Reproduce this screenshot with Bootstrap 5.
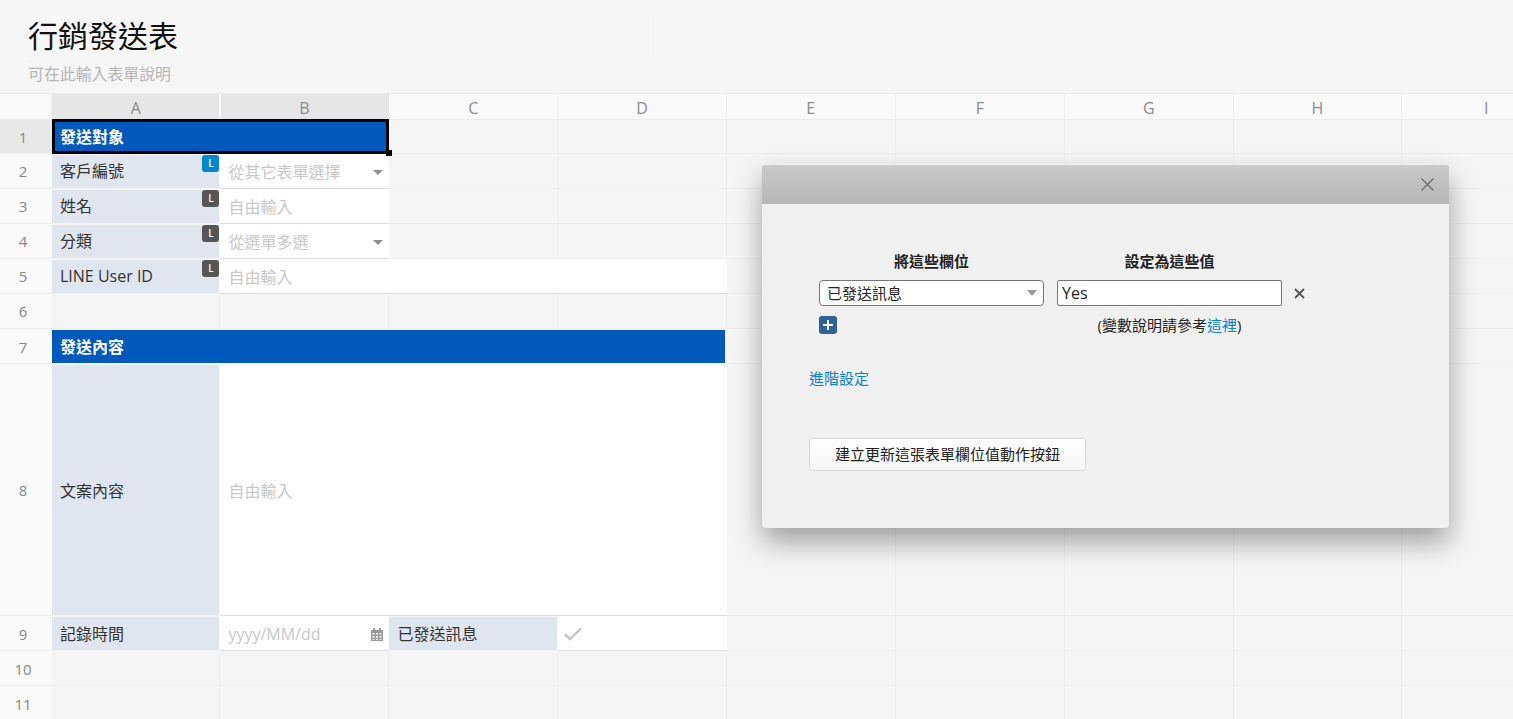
<!DOCTYPE html>
<html lang="zh-Hant">
<head>
<meta charset="utf-8">
<title>行銷發送表</title>
<link href="https://cdn.jsdelivr.net/npm/bootstrap@5.3.0/dist/css/bootstrap.min.css" rel="stylesheet">
<style>
html,body{height:100%;overflow:hidden}
body{background:#f6f6f6;font-family:"Open Sans","Noto Sans CJK TC",sans-serif;color:#333;font-size:16px;position:relative}
.head-zone{height:94px;padding:11px 0 0 27px;border-bottom:1px solid #ececec}
.doc-title{width:627px;height:46px;margin:0;padding:1px 0 0;font-size:30px;line-height:46px;font-weight:400;color:#111;border:1px solid #f3f3f3;font-family:inherit}
.doc-desc{width:1001px;height:25px;margin-top:3px;padding:1px 0 0;font-size:15.9px;line-height:25px;color:#b5b5b5;border:1px solid #f3f3f3}
.sheet{display:grid;grid-template-columns:52px 168.4px 169px 169px 168.4px 169px 169px 169px 168.4px 169px;grid-template-rows:26px 34px 35px 35px 35px 35px 35px 35px 252px 35px 35px 35px;width:1520px}
.hc{display:flex;align-items:center;justify-content:center;background:#f9f9f9;color:#8c8c8c;font-size:16px;border-bottom:1px solid #ececec;border-right:1px solid #f0f0f0;padding-top:2px}
.hc-a{background:#e6e6e6;border-right:1px solid #f9f9f9}
.hc-b{background:#e6e6e6;border-left:1px solid #f9f9f9;border-right:0;padding-right:2px}
.rc{display:flex;align-items:center;justify-content:center;background:#fafafa;color:#888;font-size:15px;border-bottom:1px solid #ececec;padding:0 6px 0 0}
.rc-late{padding-top:2px}
.rc-on{background:#e8e8e8;padding-top:2px}
.ec{background:#f5f5f5;border-right:1px solid #eeeeee;border-bottom:1px solid #eeeeee}
.sec{display:flex;align-items:center;background:#0059bb;color:#fff;font-weight:700;padding:0 0 0 8px;font-size:16px}
.sec-pick{outline:3px solid #000;outline-offset:-3px;position:relative;margin-top:-1px;padding-top:1px}
.sec-pick::after{content:"";position:absolute;right:-3px;bottom:-2px;width:6px;height:6px;background:#000}
.sec-plain{margin:1px 2px 1px 0;padding-top:1px}
.lab{position:relative;display:flex;align-items:center;background:#e0e6ef;padding:0 0 1px 8px;color:#333;border-top:1px solid #f5f5f5;border-bottom:1px solid #f2f2f2;border-right:1px solid #fff}
.lab-low{padding:1px 0 0 8px}
.tag{position:absolute;top:0;right:0;width:17px;height:17px;border-radius:3px;background:#555;color:#fff;font-size:10px;font-weight:600;display:flex;align-items:center;justify-content:center}
.tag-blue{background:#0088cc}
.inp{display:flex;align-items:center;justify-content:space-between;background:#fff;padding:2px 6px 0 8px;color:#c8c8c8;border-bottom:1px solid #dedede}
.caret-mini{width:0;height:0;border-left:5px solid transparent;border-right:5px solid transparent;border-top:5px solid #8f8f8f}
.dlg{position:absolute;left:762px;top:164px;width:687px;height:364px;background:#f0f0f0;border:0;border-radius:4px;box-shadow:0 14px 28px rgba(0,0,0,.35);font-size:15px;color:#222;overflow:hidden}
.dlg-top{height:40px;background:linear-gradient(#cacaca,#b6b6b6);border-top:1px solid #f4f4f4;display:flex;align-items:center;justify-content:flex-end;padding-right:15px}
.dlg-body{padding:46px 47px 0}
.col-one{width:225px;margin-left:10px}
.col-two{width:225px;margin-left:13px}
.f-title{font-weight:700;text-align:center;color:#222;line-height:22px}
.f-hd{display:flex;margin-bottom:8px}
.f-row{display:flex;align-items:center}
.fake-select{height:26px;border:1px solid #777;border-radius:4px;background:#fff;padding:0 6px 0 7px;display:flex;align-items:center;justify-content:space-between;line-height:1}
.fake-select i{width:0;height:0;border-left:5px solid transparent;border-right:5px solid transparent;border-top:6px solid #999}
.fake-input{width:225px;margin-left:13px;height:26px;border:1px solid #777;border-radius:2px;background:#fff;padding:0 4px;line-height:24px;font-size:16px}
.x-rem{margin-left:12px;line-height:0}
.add-sq{width:18px;height:18px;margin-top:10px;border-radius:3px;background:#2f6398;display:flex;align-items:center;justify-content:center}
.hint{width:225px;margin-left:13px;padding-top:9px;text-align:center;white-space:nowrap;font-size:15px;line-height:20px}
.lnk{color:#0a7fd6;text-decoration:none}
.adv{margin-top:32px;line-height:22px}
.mk-btn{display:block;margin-top:49px;width:277px;height:33px;padding:0;background:linear-gradient(#fff,#f5f5f5);border:1px solid #d8d8d8;border-radius:3px;color:#222;font-size:15px;line-height:31px}
.check-nudge{margin-left:-2px}
</style>
</head>
<body>
<div class="head-zone">
  <h1 class="doc-title">行銷發送表</h1>
  <div class="doc-desc">可在此輸入表單說明</div>
</div>
<div class="sheet">
  <div class="hc"></div><div class="hc hc-a">A</div><div class="hc hc-b">B</div><div class="hc">C</div><div class="hc">D</div><div class="hc">E</div><div class="hc">F</div><div class="hc">G</div><div class="hc">H</div><div class="hc">I</div>

  <div class="rc rc-on">1</div><div class="sec sec-pick" style="grid-column:span 2">發送對象</div><div class="ec"></div><div class="ec"></div><div class="ec"></div><div class="ec"></div><div class="ec"></div><div class="ec"></div><div class="ec"></div>

  <div class="rc">2</div><div class="lab">客戶編號<span class="tag tag-blue">L</span></div><div class="inp"><span>從其它表單選擇</span><span class="caret-mini"></span></div><div class="ec"></div><div class="ec"></div><div class="ec"></div><div class="ec"></div><div class="ec"></div><div class="ec"></div><div class="ec"></div>

  <div class="rc">3</div><div class="lab">姓名<span class="tag">L</span></div><div class="inp"><span>自由輸入</span></div><div class="ec"></div><div class="ec"></div><div class="ec"></div><div class="ec"></div><div class="ec"></div><div class="ec"></div><div class="ec"></div>

  <div class="rc">4</div><div class="lab">分類<span class="tag">L</span></div><div class="inp"><span>從選單多選</span><span class="caret-mini"></span></div><div class="ec"></div><div class="ec"></div><div class="ec"></div><div class="ec"></div><div class="ec"></div><div class="ec"></div><div class="ec"></div>

  <div class="rc">5</div><div class="lab">LINE User ID<span class="tag">L</span></div><div class="inp" style="grid-column:span 3"><span>自由輸入</span></div><div class="ec"></div><div class="ec"></div><div class="ec"></div><div class="ec"></div><div class="ec"></div>

  <div class="rc">6</div><div class="ec"></div><div class="ec"></div><div class="ec"></div><div class="ec"></div><div class="ec"></div><div class="ec"></div><div class="ec"></div><div class="ec"></div><div class="ec"></div>

  <div class="rc rc-late">7</div><div class="sec sec-plain" style="grid-column:span 4">發送內容</div><div class="ec"></div><div class="ec"></div><div class="ec"></div><div class="ec"></div><div class="ec"></div>

  <div class="rc rc-late">8</div><div class="lab lab-low">文案內容</div><div class="inp" style="grid-column:span 3"><span>自由輸入</span></div><div class="ec"></div><div class="ec"></div><div class="ec"></div><div class="ec"></div><div class="ec"></div>

  <div class="rc rc-late">9</div><div class="lab lab-low">記錄時間</div>
  <div class="inp"><span>yyyy/MM/dd</span>
    <svg width="12" height="13" viewBox="0 0 12 13"><path fill="#999" d="M2 0h2v2h4V0h2v2h2v11H0V2h2zM1.500 5v1.500h2V5zm3.500 0v1.500h2V5zm3.500 0v1.500h2V5zM1.500 8v1.500h2V8zM5 8v1.500h2V8zm3.500 0v1.500h2V8zM1.500 10.800v1h2v-1zm3.500 0v1h2v-1zm3.500 0v1h2v-1z"/></svg>
  </div>
  <div class="lab lab-low">已發送訊息</div>
  <div class="inp">
    <svg width="18" height="14" viewBox="0 0 18 14" class="me-auto check-nudge"><path fill="none" stroke="#c4c4c4" stroke-width="2.400" d="M1 7.500l5 4.500L17 1.500"/></svg>
  </div>
  <div class="ec"></div><div class="ec"></div><div class="ec"></div><div class="ec"></div><div class="ec"></div>

  <div class="rc rc-late">10</div><div class="ec"></div><div class="ec"></div><div class="ec"></div><div class="ec"></div><div class="ec"></div><div class="ec"></div><div class="ec"></div><div class="ec"></div><div class="ec"></div>
  <div class="rc rc-late">11</div><div class="ec"></div><div class="ec"></div><div class="ec"></div><div class="ec"></div><div class="ec"></div><div class="ec"></div><div class="ec"></div><div class="ec"></div><div class="ec"></div>
</div>

<div class="card dlg">
  <div class="dlg-top">
    <svg width="13" height="13" viewBox="0 0 13 13"><path stroke="#666" stroke-width="1.100" d="M.5.500l12 12M12.500.500l-12 12"/></svg>
  </div>
  <div class="dlg-body">
    <div class="f-hd">
      <div class="col-one f-title">將這些欄位</div>
      <div class="col-two f-title">設定為這些值</div>
    </div>
    <div class="f-row">
      <div class="col-one fake-select"><span>已發送訊息</span><i></i></div>
      <div class="fake-input">Yes</div>
      <span class="x-rem"><svg width="11" height="11" viewBox="0 0 11 11"><path stroke="#555" stroke-width="1.800" d="M1 1l9 9M10 1l-9 9"/></svg></span>
    </div>
    <div class="d-flex">
      <div class="col-one"><div class="add-sq"><svg width="10" height="10" viewBox="0 0 10 10"><path stroke="#fff" stroke-width="2" d="M5 0v10M0 5h10"/></svg></div></div>
      <div class="hint">(變數說明請參考<a class="lnk" href="#">這裡</a>)</div>
    </div>
    <div class="adv"><a class="lnk" href="#">進階設定</a></div>
    <button type="button" class="btn mk-btn">建立更新這張表單欄位值動作按鈕</button>
  </div>
</div>
<script src="https://cdn.jsdelivr.net/npm/bootstrap@5.3.0/dist/js/bootstrap.bundle.min.js"></script>
</body>
</html>
